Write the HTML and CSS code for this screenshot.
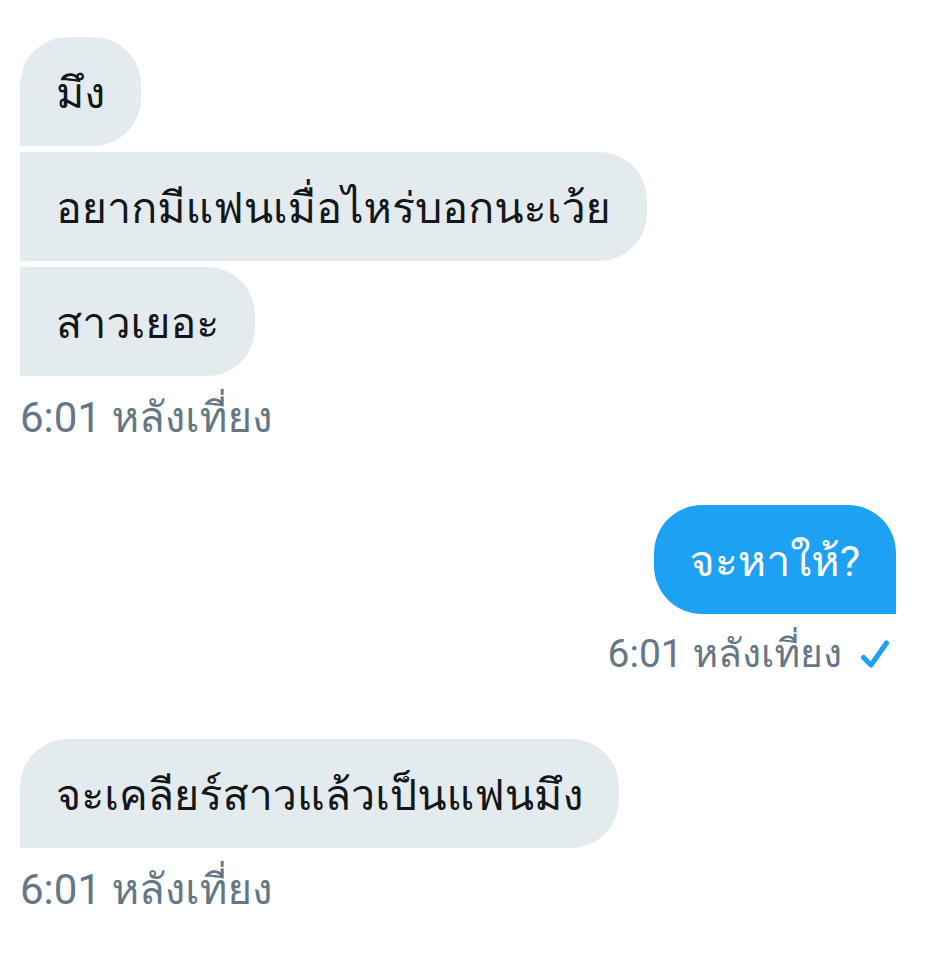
FILE: index.html
```html
<!DOCTYPE html>
<html lang="th">
<head>
  <meta charset="UTF-8">
  <meta name="viewport" content="width=device-width, initial-scale=1.0">
  <title>ข้อความ</title>
  <link rel="stylesheet" href="styles.css">
</head>
<body>
  <main class="chat">
    <!-- Received -->
    <section class="group">
      <p class="bubble bubble-first">มึง</p>
      <p class="bubble">อยากมีแฟนเมื่อไหร่บอกนะเว้ย</p>
      <p class="bubble">สาวเยอะ</p>
      <div class="meta"><time datetime="18:01">6:01 หลังเที่ยง</time></div>
    </section>

    <!-- Sent -->
    <section class="group group-sent">
      <p class="bubble bubble-sent">จะหาให้?</p>
      <div class="meta meta-sent">
        <time datetime="18:01">6:01 หลังเที่ยง</time>
        <svg class="check" viewBox="0 0 30 30" role="img" aria-label="ส่งแล้ว">
          <path d="M3.500 18.500 L11 26 L26.500 4"></path>
        </svg>
      </div>
    </section>

    <!-- Received -->
    <section class="group">
      <p class="bubble bubble-first">จะเคลียร์สาวแล้วเป็นแฟนมึง</p>
      <div class="meta"><time datetime="18:01">6:01 หลังเที่ยง</time></div>
    </section>
  </main>
</body>
</html>
```
FILE: styles.css
```css
:root {
  --background: #ffffff;
  --foreground: #14171a;
  --muted: #657786;
  --received: #e4ebef;
  --primary: #1da1f2;
}

body {
  margin: 0;
  background: var(--background);
  color: var(--foreground);
  font-family: Roboto, Loma, "Noto Sans Thai Looped", "Noto Sans", sans-serif;
}

.chat {
  display: flex;
  flex-direction: column;
  gap: 51px;
  padding: 37px 31px 37px 20px;
}

.group {
  display: flex;
  flex-direction: column;
  align-items: flex-start;
  gap: 6px;
}

.group-sent {
  align-items: flex-end;
}

.bubble {
  margin: 0;
  padding: 26px 36px 22px;
  border-radius: 0 48px 48px 0;
  background: var(--received);
  font-size: 43px;
  line-height: 61px;
}

.bubble-first {
  border-radius: 48px 48px 48px 0;
}

.bubble-sent {
  border-radius: 48px 48px 0 48px;
  background: var(--primary);
  color: #ffffff;
}

.meta {
  display: flex;
  align-items: center;
  gap: 18px;
  color: var(--muted);
  font-size: 42px;
  line-height: 72px;
}

.meta-sent {
  padding-right: 6px;
  font-size: 39px;
  line-height: 68px;
}

.check {
  width: 30px;
  height: 30px;
  fill: none;
  stroke: var(--primary);
  stroke-width: 5;
  stroke-linecap: round;
  stroke-linejoin: round;
}
```
